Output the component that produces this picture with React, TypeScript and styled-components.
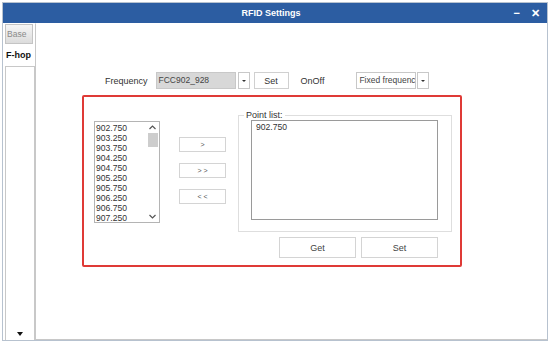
import React from "react";
import styled, { createGlobalStyle } from "styled-components";

const GlobalStyle = createGlobalStyle`
  body {
    margin: 0;
    background: #ffffff;
    font-family: "Liberation Sans", Arial, sans-serif;
    font-size: 9px;
    color: #333333;
  }
`;

const freqs = [
  "902.750",
  "903.250",
  "903.750",
  "904.250",
  "904.750",
  "905.250",
  "905.750",
  "906.250",
  "906.750",
  "907.250",
];

export default function App() {
  return (
    <>
      <GlobalStyle />
      <Window>
        <TitleBar>
          <span />
          <Title>RFID Settings</Title>
          <Controls>
            <Ctl>−</Ctl>
            <Ctl>✕</Ctl>
          </Controls>
        </TitleBar>
        <Body>
          <Sidebar>
            <BaseTab>Base</BaseTab>
            <SideLabel>F-hop</SideLabel>
            <SidePanel>
              <DownTri />
            </SidePanel>
          </Sidebar>
          <Main>
            <TopRow>
              <Label>Frequency</Label>
              <Select $w={80} $gray>
                FCC902_928
              </Select>
              <Arrow />
              <SmallBtn>Set</SmallBtn>
              <Label $ml={12}>OnOff</Label>
              <Select $w={60} $ml={24}>
                Fixed frequenc
              </Select>
              <Arrow $ml={1} />
            </TopRow>
            <RedBox>
              <ListBox>
                <Items>
                  {freqs.map((f) => (
                    <Item key={f}>{f}</Item>
                  ))}
                </Items>
                <Scroll>
                  <Chev>
                    <svg width="7" height="5" viewBox="0 0 7 5">
                      <path d="M0.5 4 L3.5 1 L6.5 4" fill="none" stroke="#555" strokeWidth="1.2" />
                    </svg>
                  </Chev>
                  <Thumb />
                  <Spacer />
                  <Chev>
                    <svg width="7" height="5" viewBox="0 0 7 5">
                      <path d="M0.5 1 L3.5 4 L6.5 1" fill="none" stroke="#555" strokeWidth="1.2" />
                    </svg>
                  </Chev>
                </Scroll>
              </ListBox>
              <MoveCol>
                <MoveBtn>&gt;</MoveBtn>
                <MoveBtn>&gt; &gt;</MoveBtn>
                <MoveBtn>&lt; &lt;</MoveBtn>
              </MoveCol>
              <RightCol>
                <Group>
                  <Legend>Point list:</Legend>
                  <PointBox>902.750</PointBox>
                </Group>
                <ActionRow>
                  <ActionBtn>Get</ActionBtn>
                  <ActionBtn>Set</ActionBtn>
                </ActionRow>
              </RightCol>
            </RedBox>
          </Main>
        </Body>
      </Window>
    </>
  );
}

const Window = styled.div`
  width: 546px;
  height: 339px;
  margin: 2px 0 0 2px;
  display: flex;
  flex-direction: column;
  border: 1px solid #b7c2cf;
  box-sizing: border-box;
`;

const TitleBar = styled.div`
  height: 20px;
  background: #2c5da2;
  display: grid;
  grid-template-columns: 1fr auto 1fr;
  align-items: center;
  color: #ffffff;
`;

const Title = styled.div`
  font-weight: bold;
  font-size: 9px;
  margin-left: -8px;
`;

const Controls = styled.div`
  justify-self: end;
  display: flex;
  gap: 11px;
  padding-right: 7px;
`;

const Ctl = styled.div`
  font-weight: bold;
  font-size: 11px;
  line-height: 12px;
`;

const Body = styled.div`
  flex: 1;
  display: flex;
`;

const Sidebar = styled.div`
  width: 32px;
  display: flex;
  flex-direction: column;
  padding-left: 2px;
  box-sizing: border-box;
`;

const BaseTab = styled.div`
  width: 28px;
  height: 20px;
  margin-top: 1px;
  box-sizing: border-box;
  border: 1px solid #c4c4c4;
  background: linear-gradient(#f6f6f6, #dcdcdc);
  color: #8a8a8a;
  font-size: 8.5px;
  padding: 4px 0 0 1px;
`;

const SideLabel = styled.div`
  font-weight: bold;
  color: #111111;
  font-size: 9px;
  height: 22px;
  line-height: 22px;
  margin-left: 1px;
`;

const SidePanel = styled.div`
  flex: 1;
  border: 1px solid #c8c8c8;
  border-bottom: none;
  display: flex;
  align-items: flex-end;
  justify-content: center;
  padding-bottom: 4px;
`;

const DownTri = styled.div`
  width: 0;
  height: 0;
  border-left: 3.5px solid transparent;
  border-right: 3.5px solid transparent;
  border-top: 4px solid #111111;
`;

const Main = styled.div`
  flex: 1;
  border-top: 1px solid #ffffff;
  border-left: 1px solid #c8c8c8;
  border-bottom: 1px solid #c8c8c8;
  padding: 48px 0 0 46px;
`;

const TopRow = styled.div`
  display: flex;
  align-items: center;
  height: 17px;
  margin-left: 23px;
`;

const Label = styled.div<{ $ml?: number }>`
  margin-left: ${(p) => p.$ml ?? 0}px;
  font-size: 9px;
  color: #333333;
  margin-right: 8px;
`;

const Select = styled.div<{ $w: number; $gray?: boolean; $ml?: number }>`
  width: ${(p) => p.$w}px;
  height: 17px;
  margin-left: ${(p) => p.$ml ?? 0}px;
  box-sizing: border-box;
  border: 1px solid #c8c8c8;
  background: ${(p) => (p.$gray ? "#d8d8d8" : "#ffffff")};
  color: #444444;
  font-size: 8.5px;
  padding: 2px 0 0 2px;
  white-space: nowrap;
  overflow: hidden;
`;

const Arrow = styled.div<{ $ml?: number }>`
  width: 12px;
  height: 17px;
  margin-left: ${(p) => p.$ml ?? 2}px;
  box-sizing: border-box;
  border: 1px solid #c8c8c8;
  display: flex;
  align-items: center;
  justify-content: center;
  &::after {
    content: "";
    border-left: 2px solid transparent;
    border-right: 2px solid transparent;
    border-top: 2.5px solid #333333;
  }
`;

const SmallBtn = styled.div`
  width: 35px;
  height: 17px;
  margin-left: 4px;
  box-sizing: border-box;
  border: 1px solid #d0d0d0;
  display: flex;
  align-items: center;
  justify-content: center;
  font-size: 9px;
`;

const RedBox = styled.div`
  width: 380px;
  height: 172px;
  margin-top: 6px;
  box-sizing: border-box;
  border: 2px solid #df3a36;
  border-radius: 2px;
  display: flex;
  align-items: flex-start;
`;

const ListBox = styled.div`
  width: 66px;
  height: 102px;
  margin: 24px 0 0 10px;
  box-sizing: border-box;
  border: 1px solid #b4b4b4;
  display: flex;
`;

const Items = styled.div`
  flex: 1;
  padding: 1px 0 0 1px;
`;

const Item = styled.div`
  font-size: 8.6px;
  line-height: 10px;
  color: #333333;
`;

const Scroll = styled.div`
  width: 13px;
  display: flex;
  flex-direction: column;
  align-items: center;
  background: #ffffff;
`;

const Chev = styled.div`
  height: 11px;
  display: flex;
  align-items: center;
`;

const Thumb = styled.div`
  width: 10px;
  height: 14px;
  background: #cdcdcd;
`;

const Spacer = styled.div`
  flex: 1;
`;

const MoveCol = styled.div`
  display: flex;
  flex-direction: column;
  gap: 11px;
  margin: 40px 0 0 19px;
`;

const MoveBtn = styled.div`
  width: 47px;
  height: 15px;
  box-sizing: border-box;
  border: 1px solid #d4d4d4;
  display: flex;
  align-items: center;
  justify-content: center;
  font-size: 7px;
  color: #555555;
`;

const RightCol = styled.div`
  display: flex;
  flex-direction: column;
  margin: 14px 0 0 12px;
`;

const Group = styled.fieldset`
  width: 214px;
  height: 121px;
  margin: 0;
  padding: 0 0 0 12px;
  box-sizing: border-box;
  border: 1px solid #dedede;
`;

const Legend = styled.legend`
  padding: 0 2px;
  margin-left: -7px;
  font-size: 9px;
  color: #333333;
  line-height: 9px;
`;

const PointBox = styled.div`
  width: 187px;
  height: 100px;
  margin-top: 0;
  box-sizing: border-box;
  border: 1px solid #9a9a9a;
  padding: 1px 0 0 4px;
  font-size: 8.6px;
  color: #333333;
`;

const ActionRow = styled.div`
  display: flex;
  justify-content: flex-end;
  gap: 5px;
  padding-right: 14px;
  margin-top: 5px;
`;

const ActionBtn = styled.div`
  width: 77px;
  height: 21px;
  box-sizing: border-box;
  border: 1px solid #d4d4d4;
  display: flex;
  align-items: center;
  justify-content: center;
  font-size: 9px;
  color: #444444;
`;
